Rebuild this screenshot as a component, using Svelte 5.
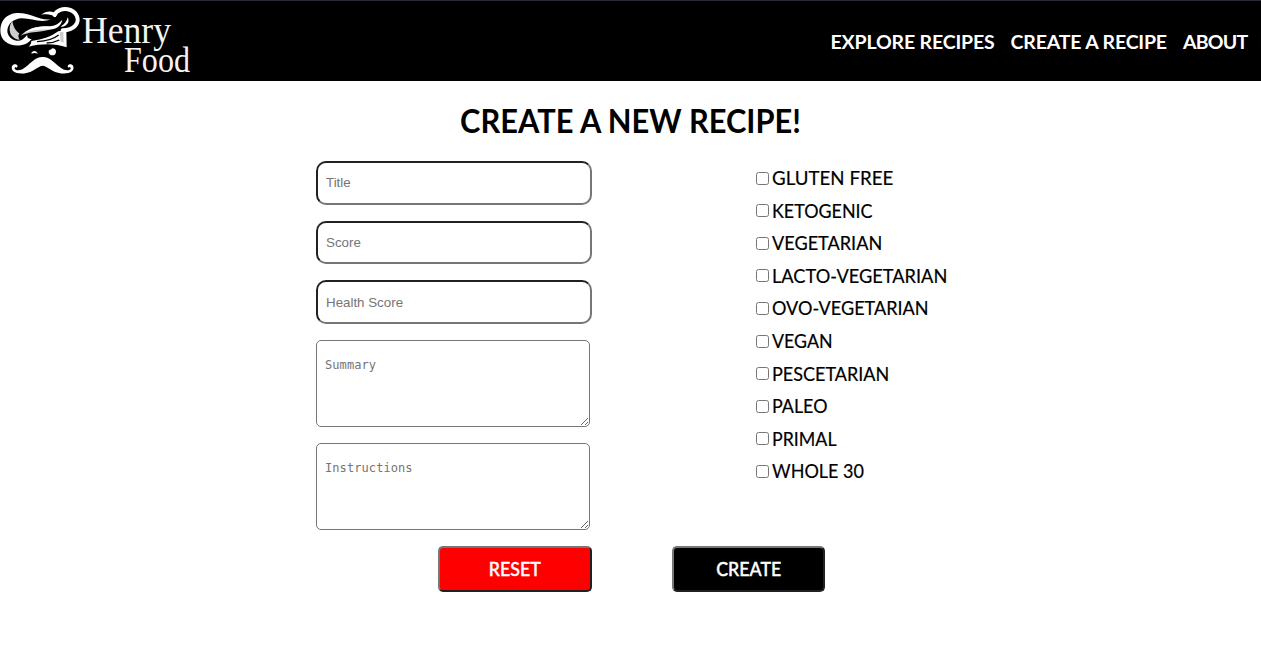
<script>
  const links = [
    { text: 'EXPLORE RECIPES', ls: -0.15 },
    { text: 'CREATE A RECIPE', ls: -0.17 },
    { text: 'ABOUT', ls: -0.75 }
  ];
  const fields = ['Title', 'Score', 'Health Score'];
  const areas = ['Summary', 'Instructions'];
  const diets = [
    { text: 'GLUTEN FREE', sx: 0.935 },
    { text: 'KETOGENIC', sx: 0.895 },
    { text: 'VEGETARIAN', sx: 0.905 },
    { text: 'LACTO-VEGETARIAN', sx: 0.91 },
    { text: 'OVO-VEGETARIAN', sx: 0.903 },
    { text: 'VEGAN', sx: 0.89 },
    { text: 'PESCETARIAN', sx: 0.9 },
    { text: 'PALEO', sx: 0.893 },
    { text: 'PRIMAL', sx: 0.89 },
    { text: 'WHOLE 30', sx: 0.9 }
  ];
</script>

<header>
  <svg class="logo" width="200" height="80" viewBox="0 1 200 80" role="img" aria-label="Henry Food">
    <g transform="scale(.33333)" fill="#fff">
      <path d="M153 58C122 70 96 55 66 55C40 56 23 72 22 92C22 107 34 119 50 122C62 124 72 116 82 104C80 111 84 116 95 117C88 127 76 134 62 136C28 140 1 122 1 92C1 62 20 41 50 39C92 37 120 64 153 58Z" />
      <path fill="#ccc" d="M37 63C27 76 26 96 36 108C42 115 50 119 59 119C54 112 54 106 58 100C48 94 39 80 37 63Z" />
      <path fill="none" stroke="#fff" stroke-width="12" stroke-linecap="round" d="M164 45C168 32 188 25 203 28C231 33 241 60 226 77C217 87 203 91 188 91" />
      <path d="M124 44C140 31 160 33 171 43L167 52C154 42 140 42 124 44Z" />
      <path fill="#ccc" d="M62 107C84 84 110 77 150 80L178 76C160 92 125 94 100 97C84 99 72 103 62 107Z" />
      <path d="M74 98C96 80 125 78 150 79C168 77 176 70 187 59C183 80 166 88 148 88C120 88 96 91 74 98ZM184 78C195 71 200 64 203 52C210 64 203 79 184 81Z" />
      <path d="M94 123C130 119 153 109 175 94L199 90L200 142C165 130 125 131 86 140C91 135 94 130 94 123Z" />
      <path fill="none" stroke="#000" stroke-width="4" d="M111 125C140 123 161 117 176 105M140 129C156 129 168 125 178 120" />
      <path fill="#ccc" d="M179 97L190 95L191 128L182 125Z" />
      <path d="M94 161C95 151 110 150 113 161C107 158 101 158 94 161Z" />
      <path d="M146 155C147 147 153 151 157 145C164 145 168 150 168 155C168 162 163 166 157 166C150 166 146 161 146 155Z" />
      <path d="M128 171C107 170 94 188 78 200C65 211 51 214 44 207C43 202 48 199 49 203C57 200 51 191 43 193C34 195 33 207 40 214C54 225 82 221 98 212C111 205 119 198 128 197C137 198 145 205 158 212C174 221 202 225 216 214C223 207 222 195 213 193C205 191 199 200 207 203C208 199 213 202 212 207C205 214 191 211 178 200C162 188 149 170 128 171Z" />
    </g>
    <g class="brand">
      <text x="82" y="43" font-size="37" textLength="89" lengthAdjust="spacingAndGlyphs">Henry</text>
      <text x="124" y="72" font-size="36" textLength="66" lengthAdjust="spacingAndGlyphs">Food</text>
    </g>
  </svg>
  <nav>
    {#each links as l}
      <a href="#top" style="letter-spacing:{l.ls}px">{l.text}</a>
    {/each}
  </nav>
</header>

<main>
  <h1>CREATE A NEW RECIPE!</h1>
  <form>
    <div class="columns">
      <div class="fields">
        {#each fields as f}<input type="text" placeholder={f} />{/each}
        {#each areas as a}<textarea placeholder={a}></textarea>{/each}
      </div>
      <div class="diets">
        {#each diets as d}
          <label><input type="checkbox" /><span style="transform:scaleX({d.sx})">{d.text}</span></label>
        {/each}
      </div>
    </div>
    <div class="actions">
      <button type="reset" class="reset"><span>RESET</span></button>
      <button type="button" class="create"><span>CREATE</span></button>
    </div>
  </form>
</main>

<style>
  :global(body) { background: #fff; }
  header, main, button { font-family: 'Trebuchet MS', Lato, sans-serif; }
  header {
    box-sizing: border-box;
    height: 81px;
    background: #000;
    border-top: 1px solid #292a38;
    display: flex;
    justify-content: space-between;
    align-items: center;
  }
  .logo { display: block; }
  .brand { font-family: 'Liberation Serif', serif; fill: #f4f4f4; }
  nav { display: flex; gap: 16px; padding: 2px 13.5px 0 0; }
  nav a { color: #fff; text-decoration: none; font-size: 19.5px; font-weight: 700; line-height: 24px; white-space: nowrap; }
  h1 { margin: 0; padding-top: 20px; font-size: 32px; line-height: 40px; font-weight: 700; text-align: center; transform: scaleX(.963); }
  form { padding-top: 20px; }
  .columns { display: flex; padding-left: 316px; gap: 164px; }
  .fields { width: 276px; display: flex; flex-direction: column; gap: 16px; }
  .fields input {
    box-sizing: border-box;
    width: 276px;
    height: 43.66px;
    padding: 0 8px;
    border: 2px solid;
    border-color: #212121 #767676 #767676 #212121;
    border-radius: 10px;
    font: 13.333px 'Liberation Sans', Arial, sans-serif;
    outline: none;
  }
  textarea {
    box-sizing: border-box;
    width: 274px;
    height: 87px;
    margin: 0;
    padding: 17px 8px;
    border: 1px solid #767676;
    border-radius: 5px;
    font: 12px/15px 'DejaVu Sans Mono', monospace;
    letter-spacing: 0.08px;
  }
  ::placeholder { color: #757575; }
  .diets { display: flex; flex-direction: column; }
  label { display: flex; align-items: center; height: 32.56px; font-size: 20px; line-height: 24px; white-space: nowrap; }
  label span { transform-origin: left center; -webkit-text-stroke: 0.2px #000; }
  label input { margin: 2px 3px 0 0; width: 13px; height: 13px; }
  .actions { display: flex; gap: 80px; padding: 16px 0 0 438px; }
  button {
    box-sizing: border-box;
    width: 153.5px;
    height: 46px;
    padding: 0;
    border: 2px solid;
    border-color: #767676 #212121 #212121 #767676;
    border-radius: 5px;
    color: #fff;
    font-size: 19px;
    font-weight: 500;
  }
  button span { display: inline-block; transform: scaleX(.935); -webkit-text-stroke: 0.4px #fff; }
  .reset { background: #f00; }
  .create { background: #000; }
</style>
